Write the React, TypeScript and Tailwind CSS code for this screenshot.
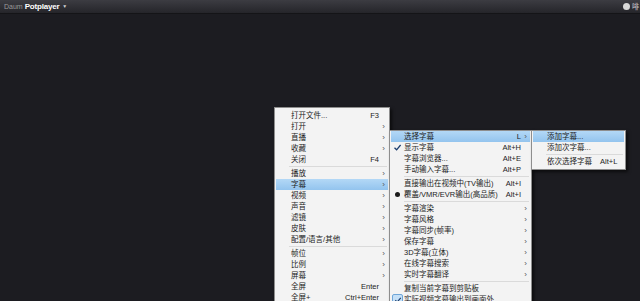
import React from "react";

type Mark = "check" | "dot" | "box" | null;

interface Item {
  label?: string;
  shortcut?: string;
  arrow?: boolean;
  active?: boolean;
  mark?: Mark;
  sep?: boolean;
}

const font = "font-['Liberation_Sans','Noto_Sans_CJK_SC',sans-serif]";

const mainMenu: Item[] = [
  { label: "打开文件...", shortcut: "F3" },
  { label: "打开", arrow: true },
  { label: "直播", arrow: true },
  { label: "收藏", arrow: true },
  { label: "关闭", shortcut: "F4" },
  { sep: true },
  { label: "播放", arrow: true },
  { label: "字幕", arrow: true, active: true },
  { label: "视频", arrow: true },
  { label: "声音", arrow: true },
  { label: "滤镜", arrow: true },
  { label: "皮肤", arrow: true },
  { label: "配置/语言/其他", arrow: true },
  { sep: true },
  { label: "帧位", arrow: true },
  { label: "比例", arrow: true },
  { label: "屏幕", arrow: true },
  { label: "全屏", shortcut: "Enter" },
  { label: "全屏+", shortcut: "Ctrl+Enter" },
];

const subtitleMenu: Item[] = [
  { label: "选择字幕", shortcut: "L", arrow: true, active: true },
  { label: "显示字幕", shortcut: "Alt+H", mark: "check" },
  { label: "字幕浏览器...", shortcut: "Alt+E" },
  { label: "手动输入字幕...", shortcut: "Alt+P" },
  { sep: true },
  { label: "直接输出在视频中(TV输出)", shortcut: "Alt+I" },
  { label: "覆盖/VMR/EVR输出(高品质)", shortcut: "Alt+I", mark: "dot" },
  { sep: true },
  { label: "字幕渲染", arrow: true },
  { label: "字幕风格", arrow: true },
  { label: "字幕同步(帧率)", arrow: true },
  { label: "保存字幕", arrow: true },
  { label: "3D字幕(立体)", arrow: true },
  { label: "在线字幕搜索", arrow: true },
  { label: "实时字幕翻译", arrow: true },
  { sep: true },
  { label: "复制当前字幕到剪贴板" },
  { label: "实际视频字幕输出到画面外", mark: "box" },
];

const selectMenu: Item[] = [
  { label: "添加字幕...", active: true },
  { label: "添加次字幕..." },
  { sep: true },
  { label: "依次选择字幕", shortcut: "Alt+L" },
];

function MarkIcon({ mark }: { mark: Mark }) {
  if (mark === "check")
    return (
      <svg width="9" height="9" viewBox="0 0 9 9">
        <path d="M1.5 4.8 L3.6 6.8 L7.6 2" fill="none" stroke="#1b3d6e" strokeWidth="1.3" />
      </svg>
    );
  if (mark === "dot") return <span className="block w-[5px] h-[5px] rounded-full bg-[#1a1a1a]" />;
  if (mark === "box")
    return (
      <span className="flex items-center justify-center w-[11px] h-[11px] rounded-[2px] border border-[#6fa6d8] bg-[#c5e0f7]">
        <svg width="8" height="8" viewBox="0 0 9 9">
          <path d="M1.5 4.8 L3.6 6.8 L7.6 2" fill="none" stroke="#1b3d6e" strokeWidth="1.3" />
        </svg>
      </span>
    );
  return null;
}

function Menu({
  items,
  className,
  gutter,
  pad,
}: {
  items: Item[];
  className: string;
  gutter: string;
  pad: string;
}) {
  return (
    <div
      className={`absolute bg-[#f3f3f3] border border-[#8e8e8e] shadow-[2px_2px_3px_rgba(0,0,0,0.6)] ${pad} ${className} ${font}`}
    >
      {items.map((it, i) =>
        it.sep ? (
          <div key={i} className="h-[3px] flex items-center pl-[14px] pr-[2px]">
            <div className="h-px w-full bg-[#dadada]" />
          </div>
        ) : (
          <div
            key={i}
            className={`flex items-center h-[11px] mx-px text-[7.5px] leading-none text-[#1c1c1c] whitespace-nowrap ${
              it.active ? "bg-gradient-to-b from-[#b3d8f6] to-[#93c4ee]" : ""
            }`}
          >
            <div className={`${gutter} flex items-center justify-center shrink-0`}>
              <MarkIcon mark={it.mark ?? null} />
            </div>
            <span className="flex-1">{it.label}</span>
            {it.shortcut && <span className="pl-2">{it.shortcut}</span>}
            <span className="w-[9px] shrink-0 text-center text-[8px] text-[#555]">{it.arrow ? "›" : ""}</span>
          </div>
        )
      )}
    </div>
  );
}

export default function App() {
  return (
    <div className="relative w-[640px] h-[301px] overflow-hidden bg-[#1c1c21] flex flex-col">
      {/* タイトルバー */}
      <div className="h-[14px] shrink-0 flex items-center justify-between pl-[4px] bg-gradient-to-b from-[#3c3c42] to-[#25252a] border-b border-[#141417]">
        <div className="flex items-center gap-[2px] font-['Liberation_Sans',sans-serif] leading-none">
          <span className="text-[7px] text-[#9a9a9a]">Daum</span>
          <span className="text-[8px] font-bold text-white tracking-[-0.2px]">Potplayer</span>
          <span className="text-[5px] text-[#cfcfcf] ml-px">▼</span>
        </div>
        <div className="flex items-center gap-[2px] pr-[1px]">
          <span className="w-[7px] h-[7px] rounded-full bg-[#d8d8d8]" />
          <span className="text-[7px] text-[#cfcfcf] font-['Noto_Sans_CJK_SC',sans-serif] leading-none">啡</span>
        </div>
      </div>
      <div className="flex-1" />

      {/* コンテキストメニュー */}
      <Menu items={mainMenu} className="left-[274px] top-[107px] w-[116px]" gutter="w-[15px]" pad="pt-[2px] pb-[2px]" />
      <Menu items={subtitleMenu} className="left-[389px] top-[130px] w-[143px]" gutter="w-[13px]" pad="pt-0 pb-[2px]" />
      <Menu items={selectMenu} className="left-[531px] top-[130px] w-[95px]" gutter="w-[14px]" pad="pt-0 pb-[2px]" />
    </div>
  );
}
